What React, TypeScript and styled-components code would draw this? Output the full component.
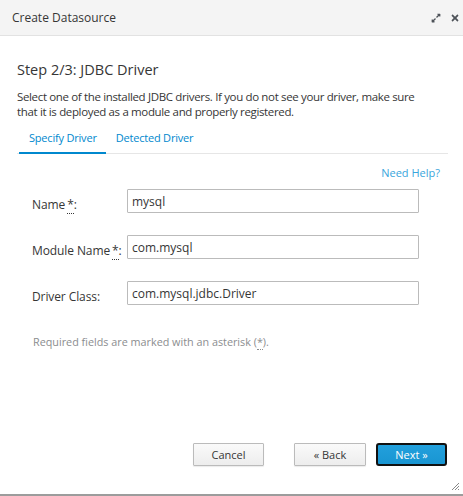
import React from "react";
import styled, { createGlobalStyle } from "styled-components";
import { FaExpandAlt, FaTimes } from "react-icons/fa";

const GlobalStyle = createGlobalStyle`
  html, body {
    margin: 0;
    padding: 0;
    background: #fff;
  }
  body {
    font-family: "Open Sans", "Liberation Sans", sans-serif;
    color: #363636;
  }
`;

const Dialog = styled.div`
  width: 463px;
  height: 496px;
  box-sizing: border-box;
  display: flex;
  flex-direction: column;
  border-bottom: 2px solid #9c9c9c;
  position: relative;
`;

const Header = styled.div`
  height: 36px;
  flex: none;
  box-sizing: border-box;
  background: #f4f4f4;
  border-bottom: 1px solid #e2e2e2;
  display: flex;
  align-items: center;
  padding: 0 2px 0 12px;
`;

const Title = styled.div`
  flex: 1;
  font-size: 12px;
  color: #363636;
`;

const HeaderIcon = styled.span`
  display: inline-flex;
  width: 13px;
  justify-content: center;
  color: #4d5258;
  font-size: 10px;
  margin-left: 6px;
`;

const Body = styled.div`
  flex: 1;
  display: flex;
  flex-direction: column;
  padding: 24px 15px 0 17px;
`;

const StepTitle = styled.h2`
  margin: 0;
  font-size: 14.5px;
  font-weight: 400;
  line-height: 20px;
  color: #363636;
`;

const Intro = styled.p`
  margin: 9px 0 0;
  padding-right: 22px;
  font-size: 11.5px;
  letter-spacing: -0.35px;
  line-height: 15px;
  color: #363636;
`;

const Tabs = styled.div`
  display: flex;
  margin-top: 8px;
  padding-left: 2px;
  border-bottom: 1px solid #e6e6e6;
`;

const Tab = styled.div<{ $active?: boolean }>`
  padding: 3px 9px 7px 10px;
  margin-bottom: -1px;
  font-size: 11px;
  letter-spacing: -0.2px;
  color: #0088ce;
  border-bottom: 2px solid ${(p) => (p.$active ? "#0088ce" : "transparent")};
`;

const HelpRow = styled.div`
  display: flex;
  justify-content: flex-end;
  padding: 11px 8px 0 0;
`;

const HelpLink = styled.a`
  font-size: 11px;
  color: #39a5dc;
  text-decoration: none;
`;

const Form = styled.div`
  display: flex;
  flex-direction: column;
  gap: 22px;
  padding: 9px 0 0 15px;
`;

const Row = styled.div`
  display: grid;
  grid-template-columns: 95px 292px;
  align-items: start;
`;

const Label = styled.label`
  font-size: 12px;
  line-height: 16px;
  color: #363636;
  padding-top: 8px;
  letter-spacing: -0.1px;
`;

const Req = styled.abbr<{ $gap?: number }>`
  text-decoration: none;
  border-bottom: 1px dotted currentColor;
  margin-left: ${(p) => p.$gap ?? 0}px;
`;

const Input = styled.input`
  height: 24px;
  box-sizing: border-box;
  border: 1px solid #bbb;
  border-radius: 1px;
  padding: 0 4px;
  font-family: inherit;
  font-size: 12px;
  color: #363636;
  outline: none;
`;

const Note = styled.p`
  margin: 29px 0 0 16px;
  font-size: 10.8px;
  color: #8b8d8f;
`;

const Footer = styled.div`
  margin-top: auto;
  display: flex;
  justify-content: flex-end;
  padding: 0 1px 28px 0;
`;

const Button = styled.button<{ $primary?: boolean; $gap?: number; $w: number }>`
  width: ${(p) => p.$w}px;
  height: 23px;
  margin-left: ${(p) => p.$gap ?? 0}px;
  font-family: inherit;
  font-size: 11px;
  cursor: pointer;
  color: ${(p) => (p.$primary ? "#fff" : "#363636")};
  background: ${(p) =>
    p.$primary ? "linear-gradient(#22a0dc, #1995d2)" : "linear-gradient(#fafafa, #ededed)"};
  border: ${(p) => (p.$primary ? "2px solid #111" : "1px solid #bbb")};
  border-radius: ${(p) => (p.$primary ? "3px" : "1px")};
  box-shadow: ${(p) => (p.$primary ? "none" : "0 1px 1px rgba(0,0,0,0.08)")};
`;

const Grip = styled.svg`
  position: absolute;
  right: 3px;
  bottom: 3px;
`;

export default function App() {
  return (
    <>
      <GlobalStyle />
      <Dialog>
        <Header>
          <Title>Create Datasource</Title>
          <HeaderIcon>
            <FaExpandAlt />
          </HeaderIcon>
          <HeaderIcon>
            <FaTimes />
          </HeaderIcon>
        </Header>
        <Body>
          <StepTitle>Step 2/3: JDBC Driver</StepTitle>
          <Intro>
            Select one of the installed JDBC drivers. If you do not see your driver, make sure
            that it is deployed as a module and properly registered.
          </Intro>
          <Tabs>
            <Tab $active>Specify Driver</Tab>
            <Tab>Detected Driver</Tab>
          </Tabs>
          <HelpRow>
            <HelpLink href="#">Need Help?</HelpLink>
          </HelpRow>
          <Form>
            <Row>
              <Label>
                Name<Req $gap={2} title="required">*</Req>:
              </Label>
              <Input defaultValue="mysql" />
            </Row>
            <Row>
              <Label>
                Module Name<Req $gap={2} title="required">*</Req>:
              </Label>
              <Input defaultValue="com.mysql" />
            </Row>
            <Row>
              <Label>Driver Class:</Label>
              <Input defaultValue="com.mysql.jdbc.Driver" />
            </Row>
          </Form>
          <Note>
            Required fields are marked with an asterisk (<Req title="required">*</Req>).
          </Note>
          <Footer>
            <Button $w={71}>Cancel</Button>
            <Button $w={72} $gap={30}>
              « Back
            </Button>
            <Button $w={71} $primary $gap={10}>
              Next »
            </Button>
          </Footer>
        </Body>
        <Grip width="9" height="9" viewBox="0 0 9 9">
          <path d="M8 1 L1 8 M8 4 L4 8 M8 7 L7 8" stroke="#888" strokeWidth="1" />
        </Grip>
      </Dialog>
    </>
  );
}
